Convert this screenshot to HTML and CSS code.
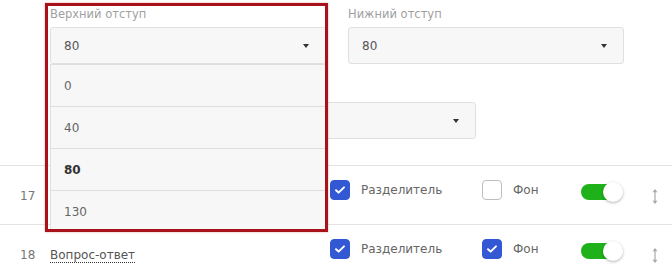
FILE: index.html
```html
<!DOCTYPE html>
<html lang="ru">
<head>
    <meta charset="UTF-8">
    <meta name="viewport" content="width=device-width, initial-scale=1.0">
    <title>Настройки блока</title>
    <link rel="stylesheet" href="styles.css">
</head>
<body>
    <div class="panel">
        <div class="settings">
            <!-- Открытый список -->
            <div class="field field-open">
                <div class="field-label">Верхний отступ</div>
                <div class="select">80<span class="caret"></span></div>
                <ul class="options">
                    <li>0</li>
                    <li>40</li>
                    <li class="selected">80</li>
                    <li>130</li>
                </ul>
                <div class="highlight"></div>
            </div>
            <div class="field">
                <div class="field-label">Нижний отступ</div>
                <div class="select">80<span class="caret"></span></div>
            </div>
            <div class="field field-wide">
                <div class="field-label"></div>
                <div class="select"><span class="caret"></span></div>
            </div>
        </div>

        <div class="rows">
            <div class="row">
                <div class="cell-num">17</div>
                <div class="cell-name"></div>
                <label class="check-cell cell-sep">
                    <span class="check checked"><svg width="12" height="10" viewBox="0 0 12 10"><path d="M2 5.2l2.6 2.4L10 2.4" fill="none" stroke="#fff" stroke-width="2" stroke-linecap="round" stroke-linejoin="round"/></svg></span>
                    <span class="check-text">Разделитель</span>
                </label>
                <label class="check-cell cell-bg">
                    <span class="check"></span>
                    <span class="check-text">Фон</span>
                </label>
                <div class="cell-toggle"><span class="toggle"><span class="knob"></span></span></div>
                <div class="cell-move"><svg width="8" height="17" viewBox="0 0 8 17"><path d="M4 2v13" stroke="#a9a9a9" stroke-width="1.2"/><path d="M1.5 4.2L4 1 6.5 4.2zM1.5 12.8L4 16 6.5 12.8z" fill="#a9a9a9"/></svg></div>
            </div>
            <div class="row">
                <div class="cell-num">18</div>
                <div class="cell-name"><span class="block-name">Вопрос-ответ</span></div>
                <label class="check-cell cell-sep">
                    <span class="check checked"><svg width="12" height="10" viewBox="0 0 12 10"><path d="M2 5.2l2.6 2.4L10 2.4" fill="none" stroke="#fff" stroke-width="2" stroke-linecap="round" stroke-linejoin="round"/></svg></span>
                    <span class="check-text">Разделитель</span>
                </label>
                <label class="check-cell cell-bg">
                    <span class="check checked"><svg width="12" height="10" viewBox="0 0 12 10"><path d="M2 5.2l2.6 2.4L10 2.4" fill="none" stroke="#fff" stroke-width="2" stroke-linecap="round" stroke-linejoin="round"/></svg></span>
                    <span class="check-text">Фон</span>
                </label>
                <div class="cell-toggle"><span class="toggle"><span class="knob"></span></span></div>
                <div class="cell-move"><svg width="8" height="17" viewBox="0 0 8 17"><path d="M4 2v13" stroke="#a9a9a9" stroke-width="1.2"/><path d="M1.5 4.2L4 1 6.5 4.2zM1.5 12.8L4 16 6.5 12.8z" fill="#a9a9a9"/></svg></div>
            </div>
        </div>
    </div>
</body>
</html>
```

FILE: styles.css
```css
body {
    margin: 0;
    font-family: "DejaVu Sans", sans-serif;
    font-size: 12px;
    color: #555;
    background: #fff;
    overflow: hidden;
}

.settings {
    display: grid;
    grid-template-columns: 276px 276px;
    column-gap: 22px;
    row-gap: 17px;
    padding: 6px 0 0 50px;
    margin-bottom: 26px;
}

.field {
    position: relative;
}

.field-wide {
    grid-column: 1 / -1;
    width: 426px;
}

.field-label {
    height: 17px;
    line-height: 17px;
    margin-bottom: 4px;
    font-size: 11.5px;
    color: #a0a0a0;
}

.select {
    height: 35px;
    display: flex;
    align-items: center;
    justify-content: space-between;
    padding: 0 16px 0 13px;
    background: #f7f7f7;
    border: 1px solid #e0e0e0;
    border-radius: 3px;
    color: #555;
}

.caret {
    width: 0;
    height: 0;
    margin-left: auto;
    border-left: 3px solid transparent;
    border-right: 3px solid transparent;
    border-top: 4px solid #333;
}

/* выпадающий список поверх остального */
.options {
    position: absolute;
    left: 0;
    right: 0;
    top: 58px;
    margin: 0;
    padding: 0;
    list-style: none;
    background: #f7f7f7;
    border-left: 1px solid #e0e0e0;
    z-index: 2;
}

.options li {
    height: 41px;
    line-height: 43px;
    padding-left: 13px;
    border-top: 1px solid #dedede;
    color: #666;
}

.options li.selected {
    font-weight: bold;
    color: #333;
}

.highlight {
    position: absolute;
    left: -5px;
    top: -3px;
    width: 277px;
    height: 223px;
    border: 3px solid #a8121a;
    box-shadow: 0 0 2px rgba(168, 18, 26, 0.35);
    z-index: 3;
    pointer-events: none;
}

.row {
    display: flex;
    align-items: flex-start;
    height: 44px;
    padding-top: 14px;
    border-top: 1px solid #e3e3e3;
}

.cell-num {
    width: 30px;
    padding: 6px 0 0 20px;
    line-height: 20px;
    color: #777;
}

.cell-name {
    width: 280px;
    padding-top: 6px;
    line-height: 20px;
}

.block-name {
    color: #555;
    border-bottom: 1px dotted #333;
}

.check-cell {
    display: flex;
    align-items: center;
    gap: 11px;
}

.cell-sep {
    width: 152px;
}

.cell-bg {
    width: 99px;
}

.check {
    width: 18px;
    height: 18px;
    border: 1px solid #bdbdbd;
    border-radius: 4px;
    background: #fff;
    display: flex;
    align-items: center;
    justify-content: center;
}

.check.checked {
    background: #3358d4;
    border-color: #3358d4;
}

.check-text {
    color: #666;
}

.cell-toggle {
    width: 70px;
    padding-top: 4px;
}

.toggle {
    width: 37px;
    height: 16px;
    border-radius: 8px;
    background: #1fb11a;
    display: flex;
    align-items: center;
    justify-content: flex-end;
}

.knob {
    flex-shrink: 0;
    width: 20px;
    height: 20px;
    margin-right: -5px;
    border-radius: 50%;
    background: #fff;
    box-shadow: 0 1px 3px rgba(0, 0, 0, 0.3);
}

.cell-move {
    padding-top: 8px;
    line-height: 0;
}
```
